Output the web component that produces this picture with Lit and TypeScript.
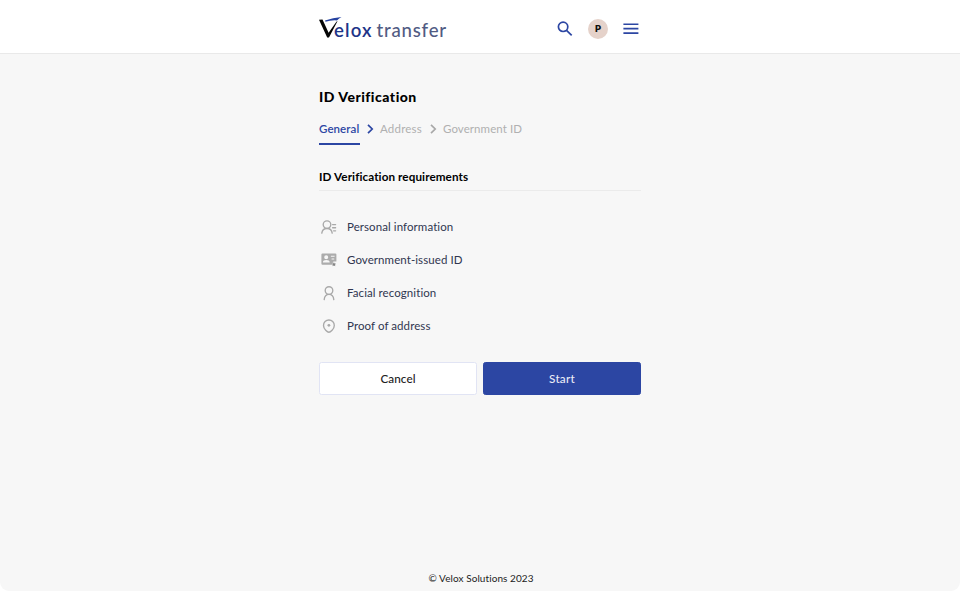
import { LitElement, html, svg, css } from "lit";
import { customElement, property } from "lit/decorators.js";

const icons = {
  person: svg`<circle cx="10" cy="7.5" r="3.8"/><path d="M5.2 16.6c.3-3.2 1.8-5.2 4.8-5.2s4.5 2 4.8 5.2"/>`,
  personLines: svg`<circle cx="8" cy="7.6" r="3.8"/><path d="M2.8 16.2c.4-3.1 2.2-4.7 5.2-4.7s4.8 1.6 5.2 4.7M13.6 7.6h3M13.6 10.7h3M14.6 13.8h2"/>`,
  card: svg`<path fill="#acacac" stroke="none" fill-rule="evenodd" d="M3.4 3.6h13a1 1 0 0 1 1 1v6.8h-3l-1.6 3.4H3.4a1 1 0 0 1-1-1V4.6a1 1 0 0 1 1-1zM7.2 5.2a2 2 0 1 0 0 4a2 2 0 0 0 0-4zM3.9 12.4h6.8c0-1.7-1.5-2.4-3.4-2.4s-3.4.7-3.4 2.4zM11.9 5.8v1h3.7v-1zM12.6 8.6v1h2.6v-1z"/><path fill="#858585" stroke="none" d="M14.9 12.2l.7 1.3 1.5.2-1.1 1 .3 1.5-1.4-.7-1.4.7.3-1.5-1.1-1 1.5-.2z"/>`,
  pin: svg`<path d="M9.9 16.2c-1.3 0-5.4-3.1-5.4-6.8a5.4 5.4 0 0 1 10.8 0c0 3.7-4.1 6.8-5.4 6.8z"/><circle cx="9.9" cy="9.3" r="1.4" fill="#a9a9a9" stroke="none"/>`,
};
type IconName = keyof typeof icons;

@customElement("requirement-row")
class RequirementRow extends LitElement {
  @property() icon: IconName = "person";
  @property() label = "";
  static styles = css`
    :host { display: flex; align-items: center; height: 33px; color: #303650; font-size: 11.5px; letter-spacing: 0.08px; }
    svg { width: 20px; height: 20px; margin-right: 8px; fill: none; stroke: #a9a9a9; stroke-width: 1.35; stroke-linecap: round; flex: none; }
  `;
  render() {
    return html`<svg viewBox="0 0 20 20">${icons[this.icon]}</svg><span>${this.label}</span>`;
  }
}

@customElement("app-root")
class AppRoot extends LitElement {
  static styles = css`
    :host { display: flex; flex-direction: column; height: 592px; background: #fff; font-family: Lato, "Open Sans", sans-serif; font-variant-ligatures: none; color: #000; }
    * { box-sizing: border-box; }
    header { height: 54px; flex: none; border-bottom: 1px solid #e9e9e9; background: #fff; }
    .bar { width: 322px; height: 53px; margin: 0 auto; display: flex; align-items: center; padding-top: 4px; }
    .logo { width: 130px; height: 28px; display: block; overflow: visible; margin-right: auto; }
    .tool { display: block; width: 20px; height: 20px; }
    .avatar { width: 20px; height: 20px; border-radius: 50%; background: #e5d2ca; display: flex; align-items: center; justify-content: center; font: 800 9.5px Inter, sans-serif; margin: 0 13px; color: #101010; }
    .page { flex: 1; min-height: 0; margin-bottom: 1px; background: #f7f7f7; border-radius: 0 0 9px 9px; display: flex; flex-direction: column; align-items: center; }
    main { width: 322px; }
    h1 { margin: 33px 0 0; font-size: 14px; line-height: 19px; font-weight: 900; letter-spacing: 0.5px; }
    nav { display: flex; height: 27px; margin-top: 12px; font-size: 11.5px; line-height: 22px; color: #b0b0b0; letter-spacing: 0.08px; }
    nav svg { width: 8px; height: 10px; margin: 6px 6px 0; fill: none; stroke: #a8a8a8; stroke-width: 1.7; }
    .active { width: 41px; color: #2c46a3; border-bottom: 2px solid #2c46a3; font-weight: 600; }
    nav svg.current { stroke: #2c46a3; }
    .address { width: 43px; letter-spacing: 0.2px; }
    h2 { margin: 21px 0 0; height: 25px; border-bottom: 1px solid #ebebeb; font-size: 11.7px; line-height: 20px; font-weight: 700; letter-spacing: 0.09px; }
    .list { margin-top: 19px; }
    .actions { display: flex; gap: 6px; margin-top: 20px; }
    button { flex: 1; height: 33px; padding: 0 0 1px; border: 1px solid #e1e4f4; border-radius: 2.5px; background: #fff; color: #202020; font: 500 11.7px Lato, sans-serif; letter-spacing: 0.1px; }
    .primary { background: #2c46a3; color: #e9ecf6; border-color: #2c46a3; letter-spacing: 0.25px; }
    footer { margin: auto 0 5px 2px; font-size: 10px; line-height: 16px; color: #222; letter-spacing: 0.08px; }
  `;
  render() {
    return html`
      <header>
        <div class="bar">
          <svg class="logo" viewBox="0 0 130 28">
            <path fill="#050505" d="M0 4.8L3.5 4.4L9.6 17.8L17.4 6.8L18.6 6L10 22.4H8.2z"/>
            <path fill="#2542a0" d="M6 5.4Q14 3 22.5 2Q20 3.2 18 5.4Q12 4.9 6.5 6.8z"/>
            <text x="15" y="21.8" font-size="18.6" font-weight="600" fill="#1e3487" textLength="37.5">elox</text>
            <text x="57.4" y="21.8" font-size="18.6" font-weight="500" fill="#515b83" textLength="69.8">transfer</text>
          </svg>
          <svg class="tool" viewBox="0 0 20 20" fill="none" stroke="#2c46a3" stroke-width="1.7"><circle cx="8.1" cy="7.8" r="4.7"/><path d="M11.5 11.3L16.7 16.4"/></svg>
          <div class="avatar">P</div>
          <svg class="tool" viewBox="0 0 20 20" stroke="#2c46a3" stroke-width="1.6"><path d="M2.4 5.2h15M2.4 9.6h15M2.4 14.1h15"/></svg>
        </div>
      </header>
      <div class="page">
        <main>
          <h1>ID Verification</h1>
          <nav>
            <span class="active">General</span>
            <svg class="current" viewBox="0 0 8 10"><path d="M2 .9L6.2 5L2 9.1"/></svg>
            <span class="address">Address</span>
            <svg viewBox="0 0 8 10"><path d="M2 .9L6.2 5L2 9.1"/></svg>
            <span>Government ID</span>
          </nav>
          <h2>ID Verification requirements</h2>
          <div class="list">
            <requirement-row icon="personLines" label="Personal information"></requirement-row>
            <requirement-row icon="card" label="Government-issued ID"></requirement-row>
            <requirement-row icon="person" label="Facial recognition"></requirement-row>
            <requirement-row icon="pin" label="Proof of address"></requirement-row>
          </div>
          <div class="actions"><button>Cancel</button><button class="primary">Start</button></div>
        </main>
        <footer>© Velox Solutions 2023</footer>
      </div>`;
  }
}
